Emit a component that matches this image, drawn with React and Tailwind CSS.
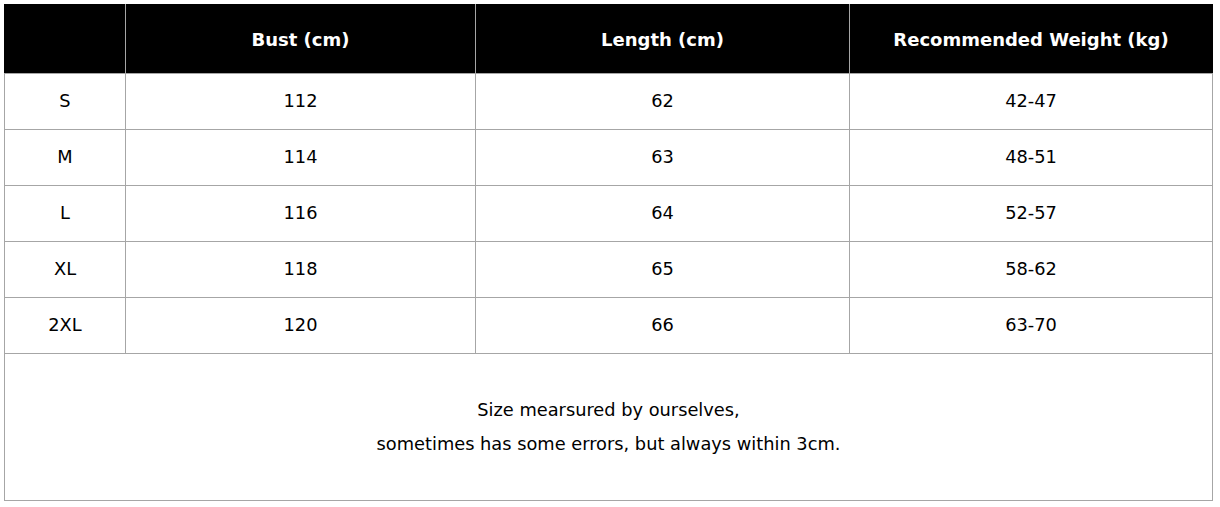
import React from 'react';

const rows = [
  ['S', '112', '62', '42-47'],
  ['M', '114', '63', '48-51'],
  ['L', '116', '64', '52-57'],
  ['XL', '118', '65', '58-62'],
  ['2XL', '120', '66', '63-70'],
];

const App = () => {
  return (
    <div className="min-h-screen bg-white pt-[4px] pl-[4px]" style={{ fontFamily: '"DejaVu Sans", sans-serif' }}>
      <table className="table-fixed border-collapse w-[1208px] text-[18px] text-black">
        <colgroup>
          <col className="w-[121px]" />
          <col className="w-[350px]" />
          <col className="w-[374px]" />
          <col className="w-[363px]" />
        </colgroup>
        <thead className="bg-black text-white font-bold">
          <tr className="h-[69px]">
            <th className="border border-[#a6a6a6] border-t-black border-l-black"></th>
            <th className="border border-[#a6a6a6] border-t-black">Bust (cm)</th>
            <th className="border border-[#a6a6a6] border-t-black">Length (cm)</th>
            <th className="border border-[#a6a6a6] border-t-black border-r-black">Recommended Weight (kg)</th>
          </tr>
        </thead>
        <tbody>
          {rows.map((row, index) => (
            <tr key={index} className="h-[56px]">
              {row.map((cell, i) => (
                <td key={i} className="border border-[#a6a6a6] text-center text-[17.8px]">{cell}</td>
              ))}
            </tr>
          ))}
          <tr className="h-[147px]">
            <td colSpan={4} className="border border-[#a6a6a6] text-center text-[17.8px] leading-[34px]">
              Size mearsured by ourselves,
              <br />
              sometimes has some errors, but always within 3cm.
            </td>
          </tr>
        </tbody>
      </table>
    </div>
  );
};

export default App;
